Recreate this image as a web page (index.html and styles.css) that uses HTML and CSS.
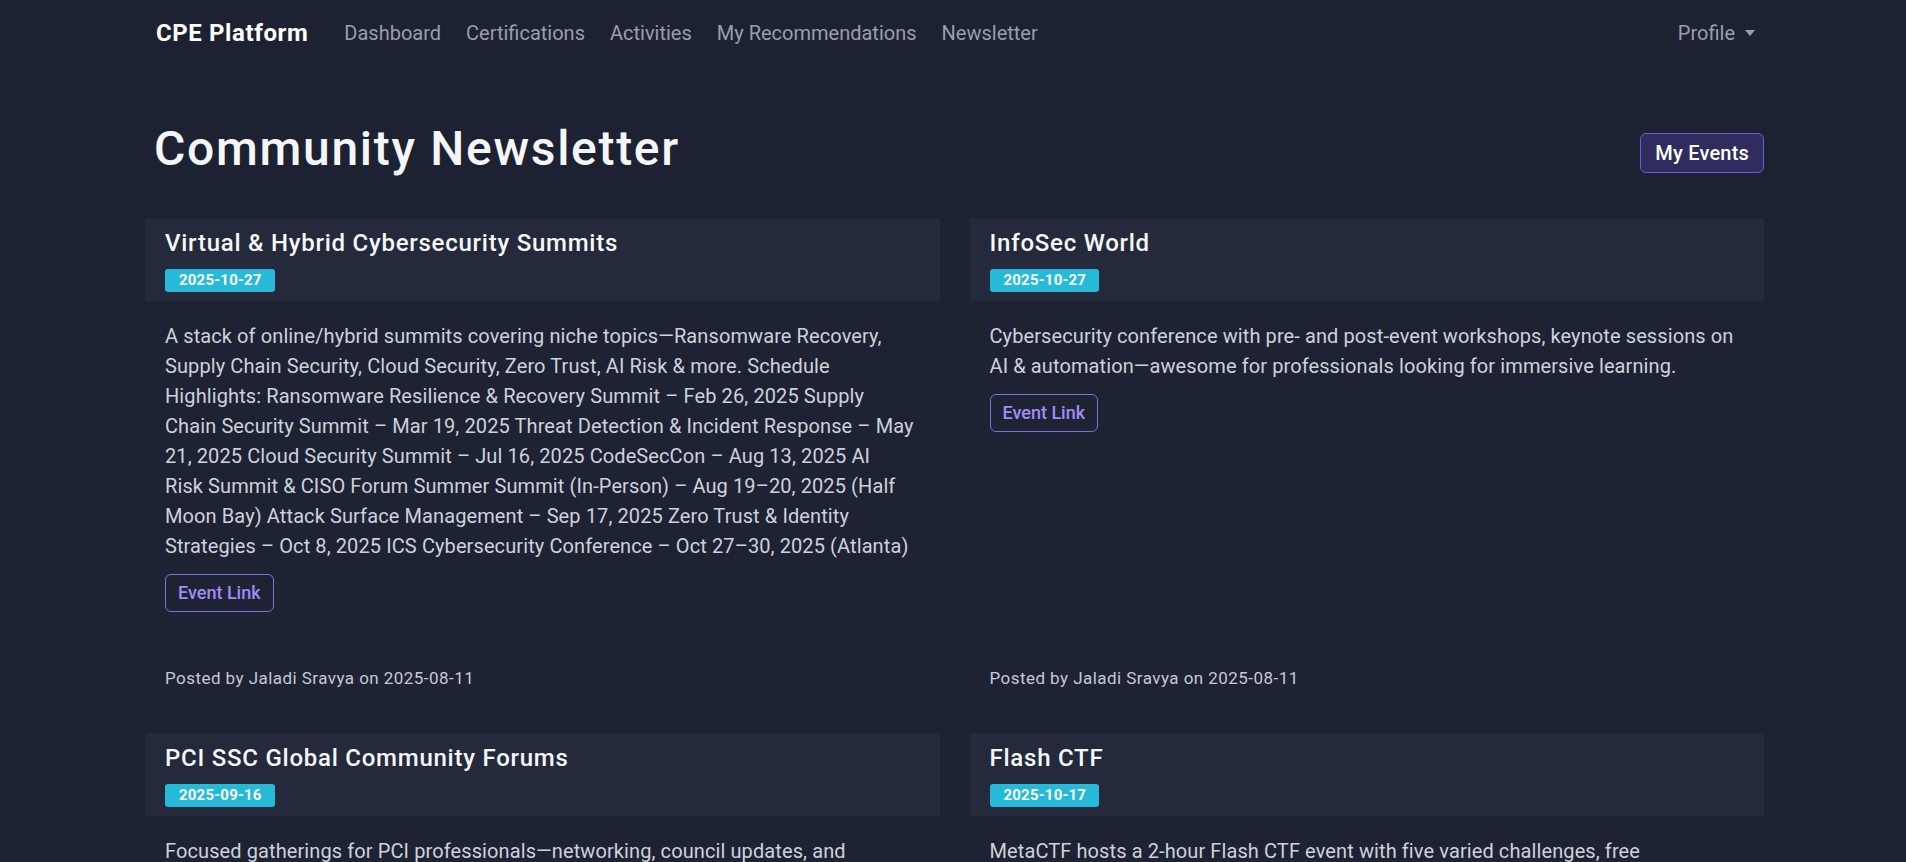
FILE: index.html
```html
<!DOCTYPE html>
<html lang="en">
<head>
<meta charset="utf-8">
<title>Community Newsletter</title>
<link rel="stylesheet" href="styles.css">
</head>
<body>
<nav class="navbar">
  <div class="container nav-inner">
    <a class="brand" href="#">CPE Platform</a>
    <ul class="nav-links">
      <li><a href="#">Dashboard</a></li>
      <li><a href="#">Certifications</a></li>
      <li><a href="#">Activities</a></li>
      <li><a href="#">My Recommendations</a></li>
      <li><a href="#">Newsletter</a></li>
    </ul>
    <a class="profile" href="#">Profile <span class="caret"></span></a>
  </div>
</nav>

<main class="container">
  <div class="page-head">
    <h1>Community Newsletter</h1>
    <a class="btn-primary" href="#">My Events</a>
  </div>

  <div class="cards">
    <article class="card">
      <header class="card-header">
        <h2>Virtual &amp; Hybrid Cybersecurity Summits</h2>
        <span class="badge">2025-10-27</span>
      </header>
      <div class="card-body">
        <p>A stack of online/hybrid summits covering niche topics—Ransomware Recovery, Supply Chain Security, Cloud Security, Zero Trust, AI Risk &amp; more. Schedule Highlights: Ransomware Resilience &amp; Recovery Summit – Feb 26, 2025 Supply Chain Security Summit – Mar 19, 2025 Threat Detection &amp; Incident Response – May 21, 2025 Cloud Security Summit – Jul 16, 2025 CodeSecCon – Aug 13, 2025 AI Risk&nbsp;Summit &amp; CISO Forum Summer Summit (In-Person) – Aug 19–20, 2025 (Half Moon Bay) Attack Surface Management – Sep 17, 2025 Zero Trust &amp; Identity Strategies – Oct 8, 2025 ICS Cybersecurity Conference – Oct 27–30, 2025 (Atlanta)</p>
        <a class="btn-outline" href="#">Event Link</a>
      </div>
      <footer class="card-footer">Posted by Jaladi Sravya on 2025-08-11</footer>
    </article>

    <article class="card">
      <header class="card-header">
        <h2>InfoSec World</h2>
        <span class="badge">2025-10-27</span>
      </header>
      <div class="card-body">
        <p>Cybersecurity conference with pre- and post-event workshops, keynote sessions on AI &amp; automation—awesome for professionals looking for immersive learning.</p>
        <a class="btn-outline" href="#">Event Link</a>
      </div>
      <footer class="card-footer">Posted by Jaladi Sravya on 2025-08-11</footer>
    </article>

    <article class="card">
      <header class="card-header">
        <h2>PCI SSC Global Community Forums</h2>
        <span class="badge">2025-09-16</span>
      </header>
      <div class="card-body">
        <p>Focused gatherings for PCI professionals—networking, council updates, and interactive sessions on the latest payment security standards.</p>
        <a class="btn-outline" href="#">Event Link</a>
      </div>
      <footer class="card-footer">Posted by Jaladi Sravya on 2025-08-11</footer>
    </article>

    <article class="card">
      <header class="card-header">
        <h2>Flash CTF</h2>
        <span class="badge">2025-10-17</span>
      </header>
      <div class="card-body">
        <p>MetaCTF hosts a 2-hour Flash CTF event with five varied challenges, free cybersecurity practice open to players of every skill level.</p>
        <a class="btn-outline" href="#">Event Link</a>
      </div>
      <footer class="card-footer">Posted by Jaladi Sravya on 2025-08-11</footer>
    </article>
  </div>
</main>
</body>
</html>
```

FILE: styles.css
```css
* { box-sizing: border-box; }

html, body {
  margin: 0;
  background: #1d2232;
  color: #cfd4dc;
  font-family: Roboto, "Liberation Sans", sans-serif;
}

a { text-decoration: none; }

.container {
  width: 1619px;
  margin-left: 145px;
}

/* Navbar */
.navbar {
  height: 66px;
}

.nav-inner {
  height: 100%;
  display: flex;
  align-items: center;
  padding: 0 9px 0 11px;
}

.brand {
  color: #ffffff;
  font-size: 24px;
  font-weight: 700;
  letter-spacing: 0.6px;
  margin-right: 26px;
}

.nav-links {
  display: flex;
  list-style: none;
  margin: 0;
  padding: 0;
  gap: 5px;
  flex: 1;
}

.nav-links a,
.profile {
  display: block;
  color: #999fa9;
  font-size: 20px;
  padding: 8px 10px;
}

.profile {
  display: flex;
  align-items: center;
  padding-right: 0;
}

.caret {
  display: inline-block;
  margin-left: 10px;
  border-left: 5px solid transparent;
  border-right: 5px solid transparent;
  border-top: 6px solid #999fa9;
}

/* Page header */
.page-head {
  display: flex;
  justify-content: space-between;
  align-items: center;
  padding-left: 9px;
  margin-top: 54px;
  margin-bottom: 40px;
}

h1 {
  margin: 0;
  font-size: 48px;
  font-weight: 500;
  letter-spacing: 1.7px;
  line-height: 58px;
  color: #f4f6fa;
}

.btn-primary {
  display: inline-block;
  margin-top: 8px;
  height: 40px;
  line-height: 38px;
  padding: 0 14px;
  background: #2f2c5e;
  border: 1px solid #6a5ae0;
  border-radius: 6px;
  color: #ffffff;
  font-size: 20px;
  font-weight: 500;
  letter-spacing: 0.2px;
}

/* Cards */
.cards {
  display: grid;
  grid-template-columns: 1fr 1fr;
  column-gap: 30px;
  row-gap: 31px;
}

.card {
  display: flex;
  flex-direction: column;
  background: #1e2334;
  border-radius: 3px;
}

.card-header {
  background: #242a3b;
  padding: 10px 20px 9px 20px;
  border-radius: 3px 3px 0 0;
}

.card-header h2 {
  margin: 0;
  font-size: 24px;
  font-weight: 500;
  letter-spacing: 0.75px;
  line-height: 30px;
  color: #f5f7fa;
}

.badge {
  display: inline-block;
  margin-top: 11px;
  height: 23px;
  line-height: 23px;
  padding: 0 13px 0 14px;
  background: #26b9d8;
  border-radius: 3px;
  color: #ffffff;
  font-size: 15px;
  font-weight: 700;
  letter-spacing: 0.2px;
}

.card-body {
  flex: 1;
  padding: 20px 20px 41px;
}

.card-body p {
  margin: 0 0 13px;
  font-size: 20px;
  letter-spacing: 0.1px;
  line-height: 30px;
  color: #cdd2da;
}

.btn-outline {
  display: inline-block;
  height: 38px;
  line-height: 36px;
  padding: 0 12px;
  border: 1px solid #7d6ee2;
  border-radius: 6px;
  color: #a08cf8;
  font-size: 18px;
  font-weight: 500;
}

.card-footer {
  border-top: 1px solid rgba(0, 0, 0, 0.1);
  padding: 12px 20px;
  font-size: 17px;
  letter-spacing: 0.45px;
  line-height: 24px;
  color: #c5cad3;
}
```
